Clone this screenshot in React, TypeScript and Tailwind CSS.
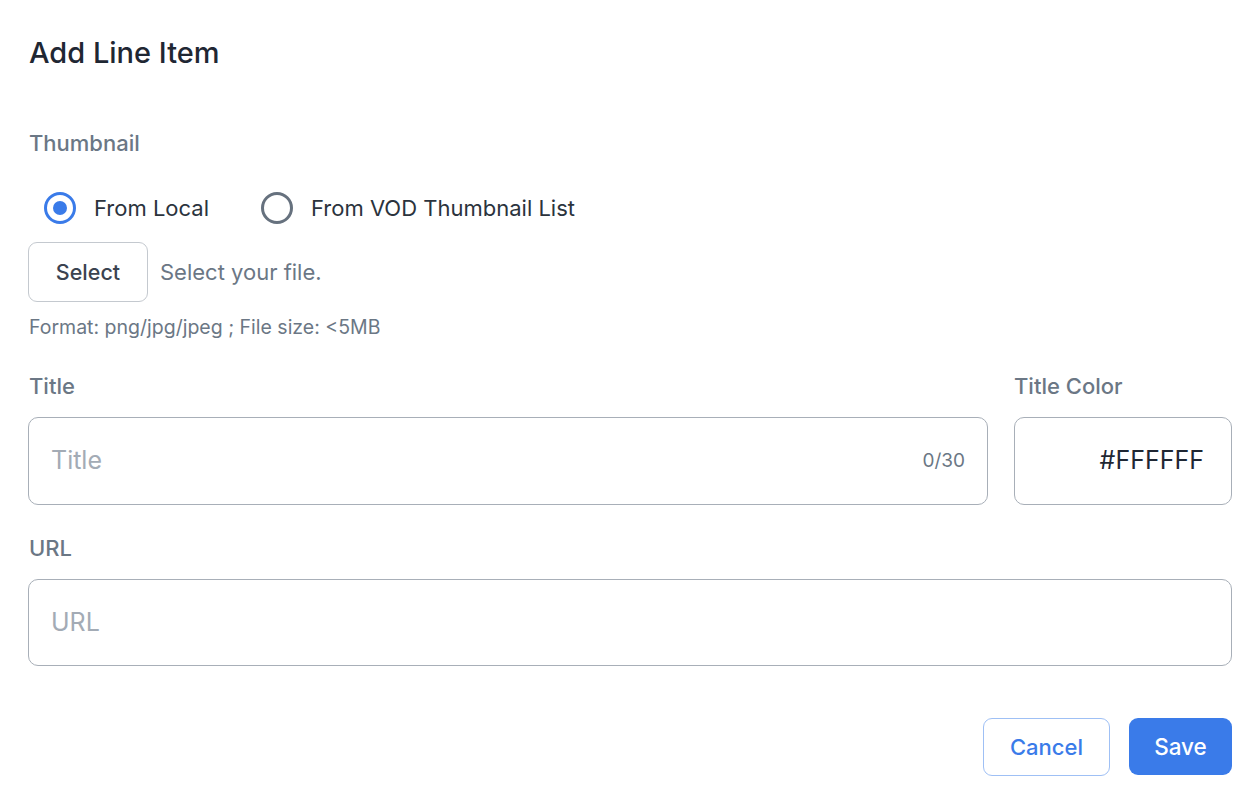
export default function App() {
  return (
    <div className="w-[1260px] h-[808px] bg-white px-[28px] text-[#1f2733]" style={{ fontFamily: 'Inter, "Noto Sans", sans-serif' }}>
      <h1 className="pt-[35px] text-[29px] leading-[36px] font-medium text-[#1f2733] pl-px">Add Line Item</h1>

      <div className="mt-[58px] text-[22px] leading-[28px] font-medium text-[#6b7785] pl-px">Thumbnail</div>

      {/* Radio group */}
      <div className="mt-[34px] flex items-center pl-[16px] h-[34px]">
        <label className="flex items-center gap-[18px]">
          <span className="w-[32px] h-[32px] rounded-full border-[3.5px] border-[#3a7be9] flex items-center justify-center">
            <span className="w-[14px] h-[14px] rounded-full bg-[#3a7be9]" />
          </span>
          <span className="text-[22px] text-[#2b333d]">From Local</span>
        </label>
        <label className="flex items-center gap-[18px] ml-[52px]">
          <span className="w-[32px] h-[32px] rounded-full border-[3.5px] border-[#66717e]" />
          <span className="text-[22px] text-[#2b333d]">From VOD Thumbnail List</span>
        </label>
      </div>

      {/* File select */}
      <div className="mt-[17px] flex items-center gap-[12px]">
        <button className="w-[120px] h-[60px] rounded-[9px] border border-[#c4c9cf] text-[21.5px] font-medium text-[#3b4350]">
          Select
        </button>
        <span className="text-[22px] text-[#6b7785]">Select your file.</span>
      </div>
      <div className="mt-[12px] text-[19.5px] leading-[26px] text-[#6b7785] pl-px">Format: png/jpg/jpeg ; File size: &lt;5MB</div>

      {/* Title + color */}
      <div className="mt-[32px] flex gap-[26px]">
        <div className="flex-1 flex flex-col">
          <label className="text-[22px] leading-[28px] font-medium text-[#6b7785] pl-px">Title</label>
          <div className="mt-[17px] h-[88px] rounded-[10px] border border-[#a8afb8] flex items-center px-[22px]">
            <span className="flex-1 text-[25px] text-[#a3abb5]">Title</span>
            <span className="text-[19px] text-[#6b7785]">0/30</span>
          </div>
        </div>
        <div className="w-[218px] flex flex-col">
          <label className="text-[22px] leading-[28px] font-medium text-[#6b7785]">Title Color</label>
          <div className="mt-[17px] h-[88px] rounded-[10px] border border-[#a8afb8] flex items-center justify-end px-[27px]">
            <span className="text-[25px] text-[#1f2733]">#FFFFFF</span>
          </div>
        </div>
      </div>

      {/* URL */}
      <div className="mt-[29px] flex flex-col">
        <label className="text-[22px] leading-[28px] font-medium text-[#6b7785] pl-px">URL</label>
        <div className="mt-[17px] h-[87px] rounded-[10px] border border-[#a8afb8] flex items-center px-[22px]">
          <span className="text-[25px] text-[#a3abb5]">URL</span>
        </div>
      </div>

      {/* Actions */}
      <div className="mt-[52px] flex justify-end gap-[19px]">
        <button className="w-[127px] h-[58px] rounded-[9px] border border-[#9fc0f5] text-[22px] font-medium text-[#3a7be9]">
          Cancel
        </button>
        <button className="w-[103px] h-[57px] rounded-[9px] bg-[#3a7be9] text-[22.5px] font-medium text-white">
          Save
        </button>
      </div>
    </div>
  )
}
